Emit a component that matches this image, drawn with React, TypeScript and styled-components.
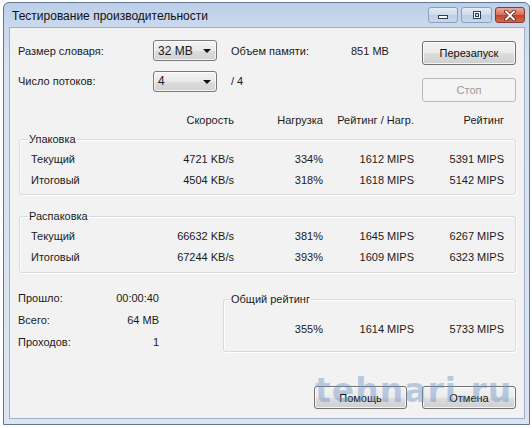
import React from "react";
import styled, { createGlobalStyle, css } from "styled-components";

const GlobalStyle = createGlobalStyle`
  html, body {
    margin: 0;
    padding: 0;
    background: #ffffff;
  }
  body {
    font-family: "Liberation Sans", Arial, sans-serif;
    font-size: 11px;
    color: #1a1a1a;
  }
  #root {
    width: 532px;
    height: 428px;
    overflow: hidden;
  }
`;

const COLS = "110px 93px 89px 91px 90px";

const Window = styled.div`
  box-sizing: border-box;
  width: 527px;
  height: 423px;
  margin: 2px 0 0 3px;
  padding: 0 4px 5px 5px;
  border: 1px solid #62768f;
  border-radius: 6px 6px 0 0;
  background: linear-gradient(#bccfe9, #cbd9ed 24px, #d6e2f1 60px, #dbe5f2);
  display: flex;
  flex-direction: column;
`;

const TitleBar = styled.div`
  height: 24px;
  display: flex;
  align-items: center;
  padding-left: 3px;
`;

const Caption = styled.div`
  flex: 1;
  font-size: 12px;
  color: #101010;
  margin-top: 1px;
`;

const CaptionButtons = styled.div`
  display: flex;
  gap: 3px;
  align-self: flex-start;
  margin-top: 4px;
`;

const CaptionButton = styled.div<{ $close?: boolean; $w: number }>`
  box-sizing: border-box;
  width: ${(p) => p.$w}px;
  height: 16px;
  border-radius: 3px;
  display: flex;
  align-items: center;
  justify-content: center;
  ${(p) =>
    p.$close
      ? css`
          border: 1px solid #8a3b2e;
          background: linear-gradient(#e9a99b, #d66b55 50%, #c4432b 51%, #cf6a4e);
        `
      : css`
          border: 1px solid #8ba0bc;
          background: linear-gradient(#e3ebf6, #ccdaec 50%, #bccde5 51%, #cad8ec);
        `}
`;

const Body = styled.div`
  position: relative;
  flex: 1;
  border: 1px solid #9fb0c6;
  background: #f2f2f2;
  padding: 12px 8px 9px 9px;
  display: flex;
  flex-direction: column;
`;

const TopSection = styled.div`
  display: flex;
  justify-content: space-between;
  align-items: flex-start;
`;

const SettingsGrid = styled.div`
  display: grid;
  grid-template-columns: 135px 78px 120px 36px;
  grid-template-rows: 21px 22px;
  row-gap: 9px;
  align-items: center;
  margin-left: -1px;
`;

const Text = styled.span<{ $right?: boolean }>`
  white-space: nowrap;
  text-align: ${(p) => (p.$right ? "right" : "left")};
`;

const Combo = styled.div`
  box-sizing: border-box;
  width: 64px;
  height: 21px;
  border: 1px solid #7a7a7a;
  border-radius: 3px;
  background: linear-gradient(#f4f4f4, #e9e9e9 50%, #dcdcdc 51%, #d2d2d2);
  box-shadow: inset 0 0 0 1px rgba(255, 255, 255, 0.7);
  display: flex;
  align-items: center;
  justify-content: space-between;
  padding: 0 5px 0 4px;
  font-size: 12px;
`;

const ComboArrow = styled.span`
  width: 0;
  height: 0;
  border-left: 4px solid transparent;
  border-right: 4px solid transparent;
  border-top: 4px solid #111;
  margin-top: 1px;
`;

const ButtonColumn = styled.div`
  display: flex;
  flex-direction: column;
  gap: 13px;
  margin-top: 1px;
`;

const Button = styled.div<{ $w: number; $h?: number; $disabled?: boolean }>`
  box-sizing: border-box;
  width: ${(p) => p.$w}px;
  height: ${(p) => p.$h ?? 24}px;
  border-radius: 3px;
  display: flex;
  align-items: center;
  justify-content: center;
  font-size: 11px;
  ${(p) =>
    p.$disabled
      ? css`
          border: 1px solid #b5b9bc;
          background: #f4f4f4;
          color: #9a9a9a;
        `
      : css`
          border: 1px solid #707070;
          background: linear-gradient(#f3f3f3, #ebebeb 50%, #dddddd 51%, #cfcfcf);
          box-shadow: inset 0 0 0 1px rgba(255, 255, 255, 0.75);
          color: #111;
        `}
`;

const HeaderRow = styled.div`
  display: grid;
  grid-template-columns: ${COLS};
  line-height: 14px;
  margin-top: 11px;
  padding: 0 12px;
`;

const Cell = styled.div<{ $right?: boolean }>`
  white-space: nowrap;
  text-align: ${(p) => (p.$right ? "right" : "left")};
`;

const GroupBox = styled.fieldset<{ $gap: number; $bottom?: number }>`
  margin: ${(p) => p.$gap}px 0 0 0;
  padding: 2px 11px ${(p) => p.$bottom ?? 4}px 11px;
  border: 1px solid #d3dbe2;
  border-radius: 3px;
  box-shadow: 1px 1px 0 #ffffff, inset 1px 1px 0 #ffffff;
  min-width: 0;
`;

const GroupLegend = styled.legend`
  padding: 0 1px;
  margin-left: -3px;
  line-height: 14px;
`;

const DataRow = styled.div`
  display: grid;
  grid-template-columns: ${COLS};
  height: 21px;
  align-items: center;
`;

const BottomSection = styled.div`
  display: flex;
  align-items: flex-start;
  margin-top: 14px;
`;

const Stats = styled.div`
  width: 141px;
  margin-left: -1px;
  display: grid;
  grid-template-columns: 1fr auto;
  grid-auto-rows: 22px;
  align-items: center;
`;

const SummaryBox = styled(GroupBox)`
  width: 293px;
  box-sizing: border-box;
  margin-left: auto;
  padding: 12px 11px 12px 9px;
`;

const SummaryRow = styled.div`
  display: grid;
  grid-template-columns: 1fr 89px 91px 90px;
  height: 21px;
  align-items: center;
`;

const Footer = styled.div`
  margin-top: auto;
  display: flex;
  justify-content: flex-end;
  gap: 15px;
`;

const Watermark = styled.div`
  position: absolute;
  left: 305px;
  top: 343px;
  font-family: "DejaVu Sans", sans-serif;
  font-weight: bold;
  font-size: 33px;
  letter-spacing: 1px;
  color: rgba(110, 150, 200, 0.45);
  pointer-events: none;
  white-space: nowrap;
`;

const MinIcon = () => (
  <svg width="12" height="10" viewBox="0 0 12 10">
    <rect x="1.5" y="5.5" width="9" height="3" fill="#ffffff" stroke="#2c3e57" />
  </svg>
);

const MaxIcon = () => (
  <svg width="12" height="10" viewBox="0 0 12 10">
    <rect x="2.5" y="1.5" width="7" height="7" fill="#ffffff" stroke="#2c3e57" />
    <rect x="4.5" y="3.5" width="3" height="3" fill="#c9d7ea" stroke="#2c3e57" />
  </svg>
);

const CloseIcon = () => (
  <svg width="14" height="11" viewBox="0 0 14 11">
    <path d="M3 1.5 L11 9.5 M11 1.5 L3 9.5" stroke="#5a1b10" strokeWidth="3.6" strokeLinecap="round" />
    <path d="M3 1.5 L11 9.5 M11 1.5 L3 9.5" stroke="#ffffff" strokeWidth="2" strokeLinecap="round" />
  </svg>
);

type Row = [string, string, string, string, string];

const packRows: Row[] = [
  ["Текущий", "4721 KB/s", "334%", "1612 MIPS", "5391 MIPS"],
  ["Итоговый", "4504 KB/s", "318%", "1618 MIPS", "5142 MIPS"],
];

const unpackRows: Row[] = [
  ["Текущий", "66632 KB/s", "381%", "1645 MIPS", "6267 MIPS"],
  ["Итоговый", "67244 KB/s", "393%", "1609 MIPS", "6323 MIPS"],
];

const stats: [string, string][] = [
  ["Прошло:", "00:00:40"],
  ["Всего:", "64 MB"],
  ["Проходов:", "1"],
];

const Rows = ({ rows }: { rows: Row[] }) => (
  <>
    {rows.map((r) => (
      <DataRow key={r[0]}>
        <Cell>{r[0]}</Cell>
        <Cell $right>{r[1]}</Cell>
        <Cell $right>{r[2]}</Cell>
        <Cell $right>{r[3]}</Cell>
        <Cell $right>{r[4]}</Cell>
      </DataRow>
    ))}
  </>
);

export default function App() {
  return (
    <>
      <GlobalStyle />
      <Window>
        <TitleBar>
          <Caption>Тестирование производительности</Caption>
          <CaptionButtons>
            <CaptionButton $w={30}>
              <MinIcon />
            </CaptionButton>
            <CaptionButton $w={31}>
              <MaxIcon />
            </CaptionButton>
            <CaptionButton $w={30} $close>
              <CloseIcon />
            </CaptionButton>
          </CaptionButtons>
        </TitleBar>

        <Body>
          <TopSection>
            <SettingsGrid>
              <Text>Размер словаря:</Text>
              <Combo>
                <span>32 MB</span>
                <ComboArrow />
              </Combo>
              <Text>Объем памяти:</Text>
              <Text $right>851 MB</Text>

              <Text>Число потоков:</Text>
              <Combo>
                <span>4</span>
                <ComboArrow />
              </Combo>
              <Text>/ 4</Text>
              <span />
            </SettingsGrid>
            <ButtonColumn>
              <Button $w={94}>Перезапуск</Button>
              <Button $w={94} $disabled>
                Стоп
              </Button>
            </ButtonColumn>
          </TopSection>

          <HeaderRow>
            <Cell />
            <Cell $right>Скорость</Cell>
            <Cell $right>Нагрузка</Cell>
            <Cell $right>Рейтинг / Нагр.</Cell>
            <Cell $right>Рейтинг</Cell>
          </HeaderRow>

          <GroupBox $gap={5}>
            <GroupLegend>Упаковка</GroupLegend>
            <Rows rows={packRows} />
          </GroupBox>

          <GroupBox $gap={14} $bottom={5}>
            <GroupLegend>Распаковка</GroupLegend>
            <Rows rows={unpackRows} />
          </GroupBox>

          <BottomSection>
            <Stats>
              {stats.map(([k, v]) => (
                <React.Fragment key={k}>
                  <Text>{k}</Text>
                  <Text $right>{v}</Text>
                </React.Fragment>
              ))}
            </Stats>
            <SummaryBox $gap={5}>
              <GroupLegend>Общий рейтинг</GroupLegend>
              <SummaryRow>
                <Cell />
                <Cell $right>355%</Cell>
                <Cell $right>1614 MIPS</Cell>
                <Cell $right>5733 MIPS</Cell>
              </SummaryRow>
            </SummaryBox>
          </BottomSection>

          <Footer>
            <Button $w={93} $h={23}>
              Помощь
            </Button>
            <Button $w={94} $h={23}>
              Отмена
            </Button>
          </Footer>

          <Watermark>tehnari.ru</Watermark>
        </Body>
      </Window>
    </>
  );
}
